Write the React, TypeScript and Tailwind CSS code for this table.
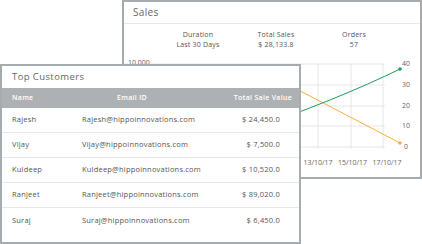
const customers = [
  { name: "Rajesh", email: "Rajesh@hippoinnovations.com", value: "$ 24,450.0" },
  { name: "Vijay", email: "Vijay@hippoinnovations.com", value: "$ 7,500.0" },
  { name: "Kuldeep", email: "Kuldeep@hippoinnovations.com", value: "$ 10,520.0" },
  { name: "Ranjeet", email: "Ranjeet@hippoinnovations.com", value: "$ 89,020.0" },
  { name: "Suraj", email: "Suraj@hippoinnovations.com", value: "$ 6,450.0" },
]

const stats = [
  { label: "Duration", value: "Last 30 Days" },
  { label: "Total Sales", value: "$ 28,133.8" },
  { label: "Orders", value: "57" },
]

// chart coords are local to the svg: page x - 124, page y - 52
const gridY = [12, 33, 54, 74, 95]
const gridX = [64, 97, 129, 162, 194, 227, 259]
const rightLabels = ["40", "30", "20", "10", "0"]
const chartFont = "'Open Sans', sans-serif"

function SalesChart() {
  return (
    <svg width="296" height="125" viewBox="0 0 296 125" className="block">
      {gridY.map((y) => (
        <line key={y} x1="0" x2="261" y1={y} y2={y} stroke="#e6e6e6" strokeWidth="1" />
      ))}
      {gridX.map((x) => (
        <line key={x} x1={x} x2={x} y1="12" y2="97" stroke="#e6e6e6" strokeWidth="1" />
      ))}
      <text x="4" y="13" fontSize="7" fill="#666" fontFamily={chartFont}>10,000</text>
      {rightLabels.map((label, i) => (
        <text key={label} x="282" y={gridY[i] + 2} fontSize="7" fill="#666" textAnchor="middle" fontFamily={chartFont}>{label}</text>
      ))}
      {["13/10/17", "15/10/17", "17/10/17"].map((label, i) => (
        <text key={label} x={194 + i * 34.5} y="113" fontSize="7" fill="#666" textAnchor="middle" fontFamily={chartFont}>{label}</text>
      ))}
      <path d="M 136 18 L 276 91" stroke="#f5b041" strokeWidth="1" fill="none" />
      <path d="M 120 80 Q 215 47 276 17" stroke="#1f9d55" strokeWidth="1" fill="none" />
      <circle cx="276" cy="91" r="1.8" fill="#f5b041" />
      <circle cx="276" cy="17" r="1.8" fill="#1f9d55" />
    </svg>
  )
}

function SalesPanel() {
  return (
    <div className="absolute left-[122px] top-0 w-[300px] h-[179px] border-2 border-[#a7abae] bg-white flex flex-col">
      <div className="h-[22px] shrink-0 border-b border-[#e8e8e8] pl-[9px] flex items-center text-[10px] tracking-[0.3px] text-[#666]">Sales</div>
      <div className="h-[28px] shrink-0 flex pt-[6px] text-[7px] leading-[10px] tracking-[0.2px] text-[#555]">
        <div className="w-[35px]" />
        {stats.map((stat) => (
          <div key={stat.label} className="w-[78px] flex flex-col items-center">
            <span>{stat.label}</span>
            <span>{stat.value}</span>
          </div>
        ))}
      </div>
      <SalesChart />
    </div>
  )
}

function CustomersPanel() {
  return (
    <div className="absolute left-0 top-[64px] w-[301px] h-[180px] border-2 border-[#a7abae] bg-white flex flex-col">
      <div className="h-[22px] shrink-0 pl-[10px] flex items-center text-[9.5px] tracking-[0.4px] text-[#666]">Top Customers</div>
      <div className="h-[20px] shrink-0 flex items-center bg-[#adb1b3] text-white font-semibold text-[7px] tracking-[0.3px]">
        <span className="w-[80px] pl-[10px]">Name</span>
        <span className="w-[100px] text-center">Email ID</span>
        <span className="flex-1 text-right pr-[7px]">Total Sale Value</span>
      </div>
      {customers.map((customer, i) => (
        <div key={customer.name} className={`h-[25px] shrink-0 flex items-center text-[7.5px] tracking-[0.2px] text-[#555] ${i < customers.length - 1 ? "border-b border-[#e8e8e8]" : ""}`}>
          <span className="w-[80px] pl-[10px]">{customer.name}</span>
          <span className="flex-1">{customer.email}</span>
          <span className="w-[80px] text-right pr-[19px]">{customer.value}</span>
        </div>
      ))}
    </div>
  )
}

export default function App() {
  return (
    <div className="relative w-[422px] h-[244px] bg-white overflow-hidden font-['Open_Sans',sans-serif]">
      <SalesPanel />
      <CustomersPanel />
    </div>
  )
}
